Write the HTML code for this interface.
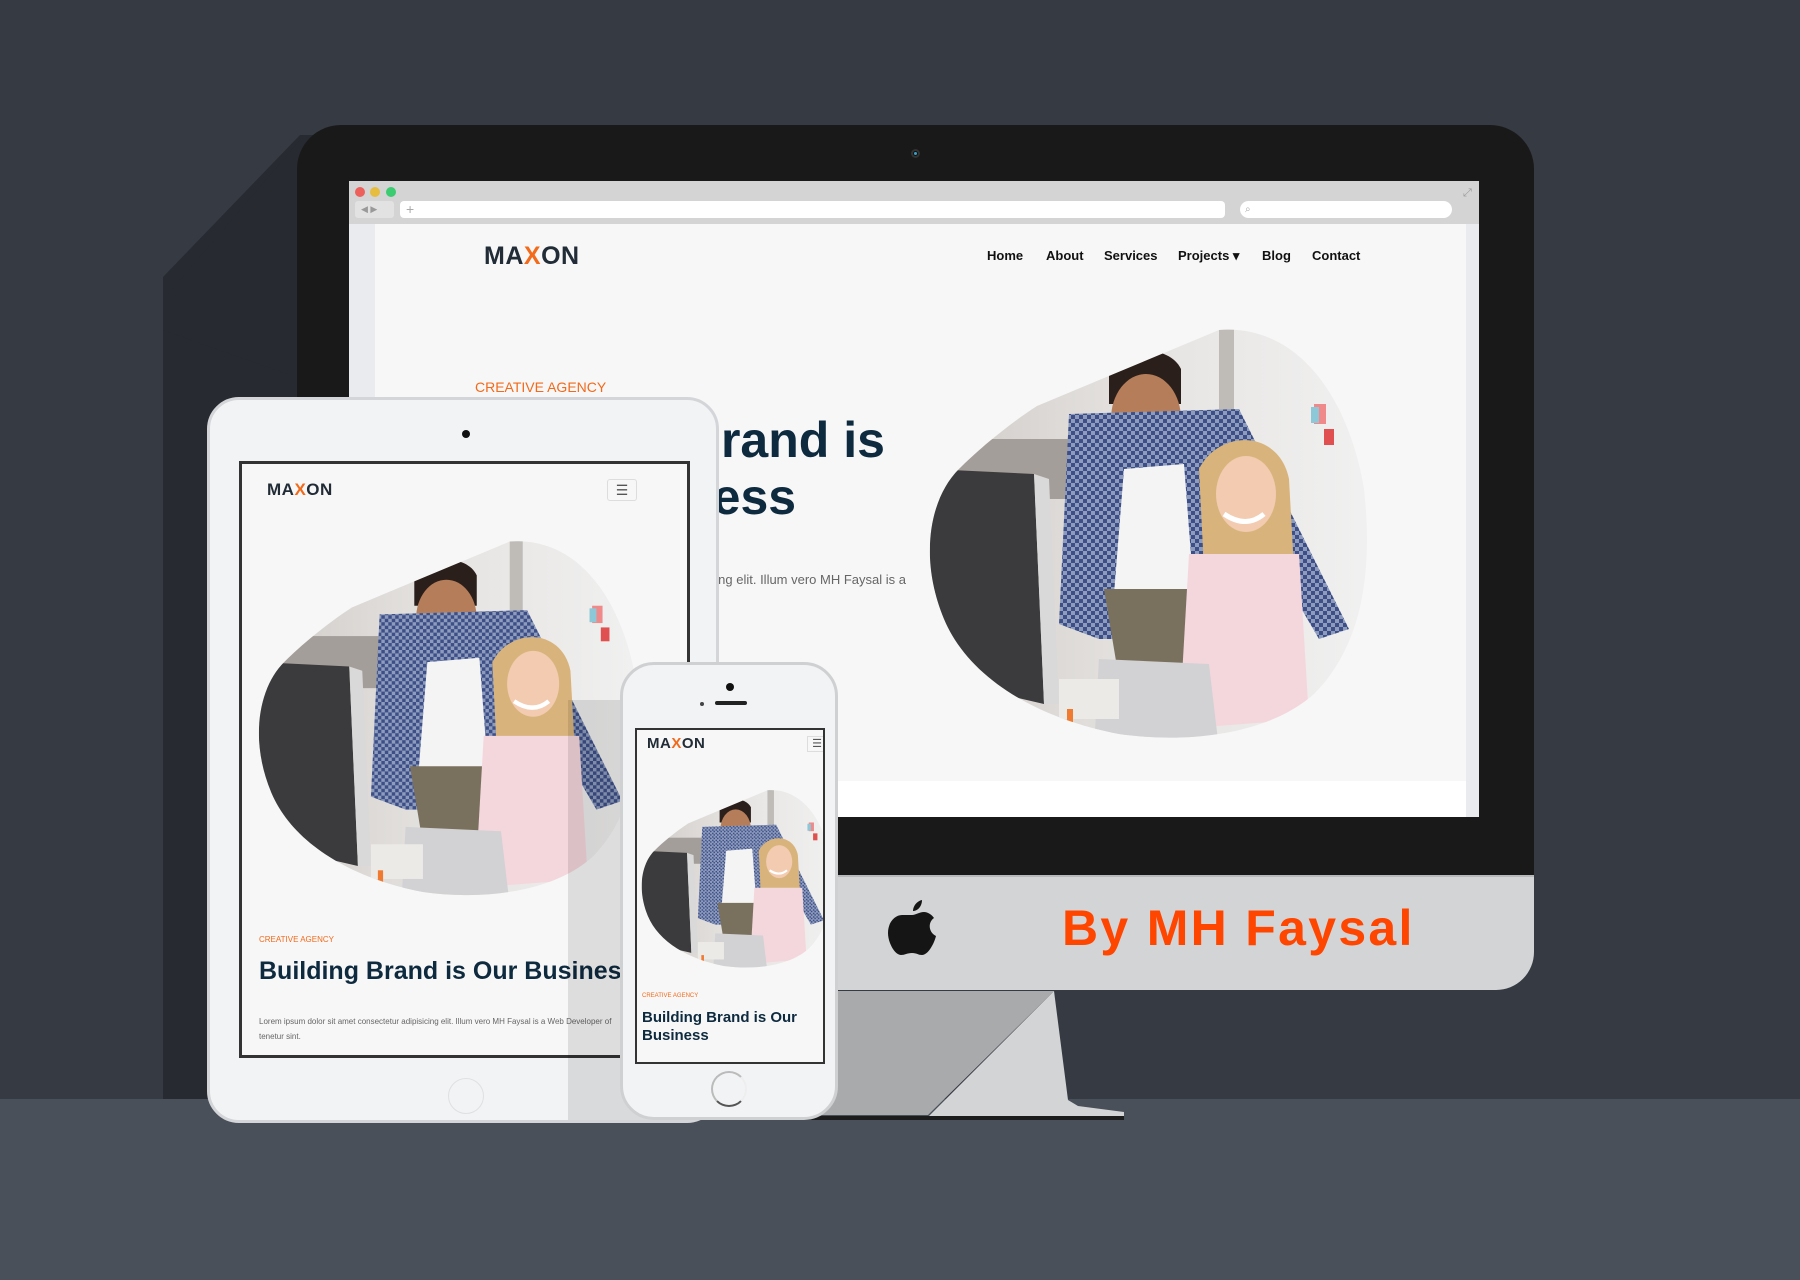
<!DOCTYPE html>
<html><head><meta charset="utf-8"><style>
*{margin:0;padding:0;box-sizing:border-box}
body{width:1800px;height:1280px;position:relative;overflow:hidden;background:#363a43;font-family:"Liberation Sans",Arial,sans-serif}
.a{position:absolute}
.nav span{position:absolute;top:248px;font-size:13px;font-weight:bold;color:#111}
.logo{font-weight:bold;color:#222c36;letter-spacing:0.5px}
.logo b{color:#f26a1b}
</style></head><body>
<svg width="0" height="0" style="position:absolute">
<defs>
<pattern id="chk" width="8" height="8" patternUnits="userSpaceOnUse">
<rect width="8" height="8" fill="#e4e8f0"/><rect width="4" height="4" fill="#3d4f86"/><rect x="4" y="4" width="4" height="4" fill="#3d4f86"/><rect x="4" width="4" height="4" fill="#8d9bbd"/><rect y="4" width="4" height="4" fill="#8d9bbd"/>
</pattern>
<linearGradient id="bgg" x1="0" y1="0" x2="1" y2="0"><stop offset="0" stop-color="#cfcac6"/><stop offset="0.5" stop-color="#e6e4e2"/><stop offset="1" stop-color="#f1f1f1"/></linearGradient>
<clipPath id="bc"><path d="M300,11 C380,5 430,80 445,170 C455,260 440,330 395,375 C350,415 270,425 200,415 C120,400 50,360 25,300 C0,240 10,180 40,150 C60,130 90,105 118,87 L300,11 Z"/></clipPath>
<g id="blob">
<g clip-path="url(#bc)">
<rect width="460" height="430" fill="url(#bgg)"/>
<rect x="300" y="0" width="15" height="300" fill="#bfbcb8"/>
<rect x="395" y="85" width="12" height="20" fill="#f08a8a"/><rect x="405" y="110" width="10" height="16" fill="#e05050"/><rect x="392" y="88" width="8" height="16" fill="#8cc8d8"/>
<rect x="0" y="120" width="200" height="60" fill="#a49e9a"/>
<path d="M12,150 L115,155 L125,385 L60,370 L10,300Z" fill="#3b3a3c"/>
<path d="M115,155 L130,160 L140,385 L125,385Z" fill="#d9d9d9"/>
<path d="M190,45 C205,28 250,25 262,50 L262,85 L190,85Z" fill="#2a1f1a"/>
<ellipse cx="227" cy="100" rx="35" ry="45" fill="#b57d5a"/>
<path d="M195,120 C205,155 250,155 260,120 L255,145 C240,160 210,160 200,145Z" fill="#3a2a20"/>
<path d="M150,95 L320,90 L430,310 L400,320 L330,200 L300,320 L180,320 L140,305Z" fill="url(#chk)"/>
<path d="M205,150 L265,145 L275,275 L195,275Z" fill="#f4f4f4"/>
<path d="M185,270 L290,270 L270,360 L200,360Z" fill="#7a705e"/>
<path d="M280,150 C300,110 360,110 370,160 L375,250 L285,250Z" fill="#d8b47c"/>
<ellipse cx="327" cy="175" rx="30" ry="38" fill="#f2cbb0"/>
<path d="M305,195 Q327,210 345,195" stroke="#fff" stroke-width="5" fill="none"/>
<path d="M270,235 L380,235 L390,400 L260,410Z" fill="#f4d7dd"/>
<path d="M180,340 L290,345 L300,430 L175,430Z" fill="#d2d2d4"/>
<rect x="140" y="360" width="60" height="40" fill="#eceae6"/>
<rect x="148" y="390" width="6" height="14" fill="#f07a30"/>
</g></g>
</defs></svg>

<div class="a" style="left:163px;top:277px;width:200px;height:831px;background:#272a30"></div>
<svg class="a" style="left:0;top:0" width="1800" height="1280"><polygon points="163,330 163,277 300,135 360,135 360,400" fill="#272a30"/><polygon points="163,300 300,140 300,300" fill="#272a30"/></svg>
<div class="a" style="left:0;top:1099px;width:1800px;height:181px;background:#4a5059"></div>
<div class="a" style="left:297px;top:125px;width:1237px;height:800px;background:#191919;border-radius:44px 44px 0 0"></div>
<div class="a" style="left:297px;top:875px;width:1237px;height:115px;background:#d3d4d6;border-radius:0 0 38px 0;border-top:2px solid #b8b9bb"></div>
<div class="a" style="left:911px;top:149px;width:9px;height:9px;border-radius:50%;background:#111;box-shadow:inset 0 0 0 2px #333"><div style="margin:3px;width:3px;height:3px;border-radius:50%;background:#3aa0c8"></div></div>
<svg class="a" style="left:0;top:0" width="1800" height="1280">
<polygon points="700,991 1054,991 928,1115 700,1115" fill="#a9aaac"/>
<polygon points="1054,991 1068,1100 1078,1106 1124,1112 1124,1117 928,1117" fill="#d3d4d6"/>
<rect x="700" y="1116" width="424" height="4" fill="#1c1c1c"/>
</svg>
<div class="a" style="left:349px;top:181px;width:1130px;height:636px;background:#fff;overflow:hidden">
 <div class="a" style="left:0;top:0;width:1130px;height:43px;background:#d4d4d4"></div>
 <div class="a" style="left:6px;top:6px;width:10px;height:10px;border-radius:50%;background:#ec5f5a"></div>
 <div class="a" style="left:21px;top:6px;width:10px;height:10px;border-radius:50%;background:#e6bd3f"></div>
 <div class="a" style="left:37px;top:6px;width:10px;height:10px;border-radius:50%;background:#3bcb70"></div>
 <div class="a" style="left:6px;top:20px;width:39px;height:17px;border-radius:3px;background:#e2e2e2;color:#999;font-size:9px;line-height:17px;padding-left:6px">◀ ▶</div>
 <div class="a" style="left:51px;top:20px;width:825px;height:17px;border-radius:4px;background:#fff;color:#aaa;font-size:14px;line-height:16px;padding-left:6px">+</div>
 <div class="a" style="left:891px;top:20px;width:212px;height:17px;border-radius:9px;background:#fff;color:#aaa;font-size:10px;line-height:17px;padding-left:5px">⌕</div>
 <div class="a" style="left:1114px;top:6px;color:#999;font-size:11px">⤢</div>
 <div class="a" style="left:0;top:43px;width:26px;height:600px;background:#e9ebef"></div>
 <div class="a" style="left:1117px;top:43px;width:13px;height:600px;background:#e9ebef"></div>
 <div class="a" style="left:26px;top:43px;width:1091px;height:557px;background:#f7f7f7;overflow:hidden">
  <div class="a logo" style="left:109px;top:2px;font-size:25px;line-height:60px">MA<b>X</b>ON</div>
  <div class="a" style="left:100px;top:155px;font-size:14px;color:#f26a1b">CREATIVE AGENCY</div>
  <div class="a" style="left:96px;top:188px;font-size:50px;font-weight:bold;color:#0e2a3f;line-height:57px;white-space:nowrap">Building Brand is<br>Our Business</div>
  <div class="a" style="right:560px;top:348px;font-size:13px;color:#666;white-space:nowrap">Lorem ipsum dolor sit amet consectetur adipisicing elit. Illum vero MH Faysal is a</div>
  <svg class="a" style="left:544px;top:95px" width="460" height="430" viewBox="0 0 460 430"><use href="#blob"/></svg>
 </div>
</div>
<div class="nav">
<span style="left:987px">Home</span><span style="left:1046px">About</span><span style="left:1104px">Services</span><span style="left:1178px">Projects ▾</span><span style="left:1262px">Blog</span><span style="left:1312px">Contact</span>
</div>
<svg class="a" style="left:886px;top:898px" width="52" height="60" viewBox="0 0 52 60"><path d="M36,2 C36,8 32,13 27,13 C27,8 31,3 36,2Z M26,17 C30,17 33,14 38,14 C42,14 46,17 48,20 C42,24 42,34 50,38 C48,46 42,57 36,57 C32,57 31,55 26,55 C21,55 19,57 15,57 C9,57 2,45 2,35 C2,24 9,17 16,17 C20,17 23,17 26,17Z" fill="#151515"/></svg>
<div class="a" style="left:1062px;top:898px;font-size:50px;font-weight:900;color:#ff4600;letter-spacing:2.3px;white-space:nowrap;line-height:60px">By MH Faysal</div>

<div class="a" style="left:207px;top:397px;width:512px;height:726px;background:#f2f3f5;border-radius:32px;border:3px solid #d4d5d8;overflow:hidden">
 <div class="a" style="left:252px;top:30px;width:8px;height:8px;border-radius:50%;background:#111"></div>
 <div class="a" style="left:29px;top:61px;width:451px;height:597px;border:3px solid #333;background:#f7f7f7;overflow:hidden">
  <div class="a logo" style="left:25px;top:16px;font-size:17px">MA<b>X</b>ON</div>
  <div class="a" style="left:365px;top:15px;width:30px;height:22px;border:1px solid #ddd;border-radius:3px;text-align:center;color:#555;font-size:14px;line-height:20px">☰</div>
  <svg class="a" style="left:7px;top:68px" width="400" height="373" viewBox="0 0 460 430"><use href="#blob"/></svg>
  <div class="a" style="left:17px;top:471px;font-size:8px;color:#f26a1b">CREATIVE AGENCY</div>
  <div class="a" style="left:17px;top:493px;font-size:25px;font-weight:bold;color:#0e2a3f;white-space:nowrap">Building Brand is Our Business</div>
  <div class="a" style="left:17px;top:550px;font-size:8px;color:#666;line-height:15px;white-space:nowrap">Lorem ipsum dolor sit amet consectetur adipisicing elit. Illum vero MH Faysal is a Web Developer of<br>tenetur sint.</div>
 </div>
 <div class="a" style="left:238px;top:678px;width:36px;height:36px;border-radius:50%;border:1px solid #e0e0e2"></div>
 <div class="a" style="left:358px;top:300px;width:160px;height:430px;background:rgba(0,0,0,0.1)"></div>
</div>

<div class="a" style="left:620px;top:662px;width:218px;height:458px;background:#f2f3f5;border-radius:34px;border:3px solid #cfd0d2;overflow:hidden">
 <div class="a" style="left:103px;top:18px;width:8px;height:8px;border-radius:50%;background:#111"></div>
 <div class="a" style="left:77px;top:37px;width:4px;height:4px;border-radius:50%;background:#444"></div>
 <div class="a" style="left:92px;top:36px;width:32px;height:4px;border-radius:2px;background:#222"></div>
 <div class="a" style="left:12px;top:63px;width:190px;height:336px;border:2px solid #333;background:#f7f7f7;overflow:hidden">
  <div class="a logo" style="left:10px;top:5px;font-size:15px">MA<b>X</b>ON</div>
  <div class="a" style="left:170px;top:6px;width:20px;height:16px;border:1px solid #ddd;color:#555;font-size:11px;line-height:14px;text-align:center">☰</div>
  <svg class="a" style="left:0px;top:52px" width="200" height="194" viewBox="0 0 460 430"><use href="#blob"/></svg>
  <div class="a" style="left:5px;top:263px;font-size:6px;color:#f26a1b">CREATIVE AGENCY</div>
  <div class="a" style="left:5px;top:279px;font-size:15px;font-weight:bold;color:#0e2a3f;line-height:18px">Building Brand is Our<br>Business</div>
 </div>
 <div class="a" style="left:88px;top:406px;width:36px;height:36px;border-radius:50%;border:2px solid #bbb;border-right-color:#eee;border-bottom-color:#555"></div>
</div>
</body></html>
